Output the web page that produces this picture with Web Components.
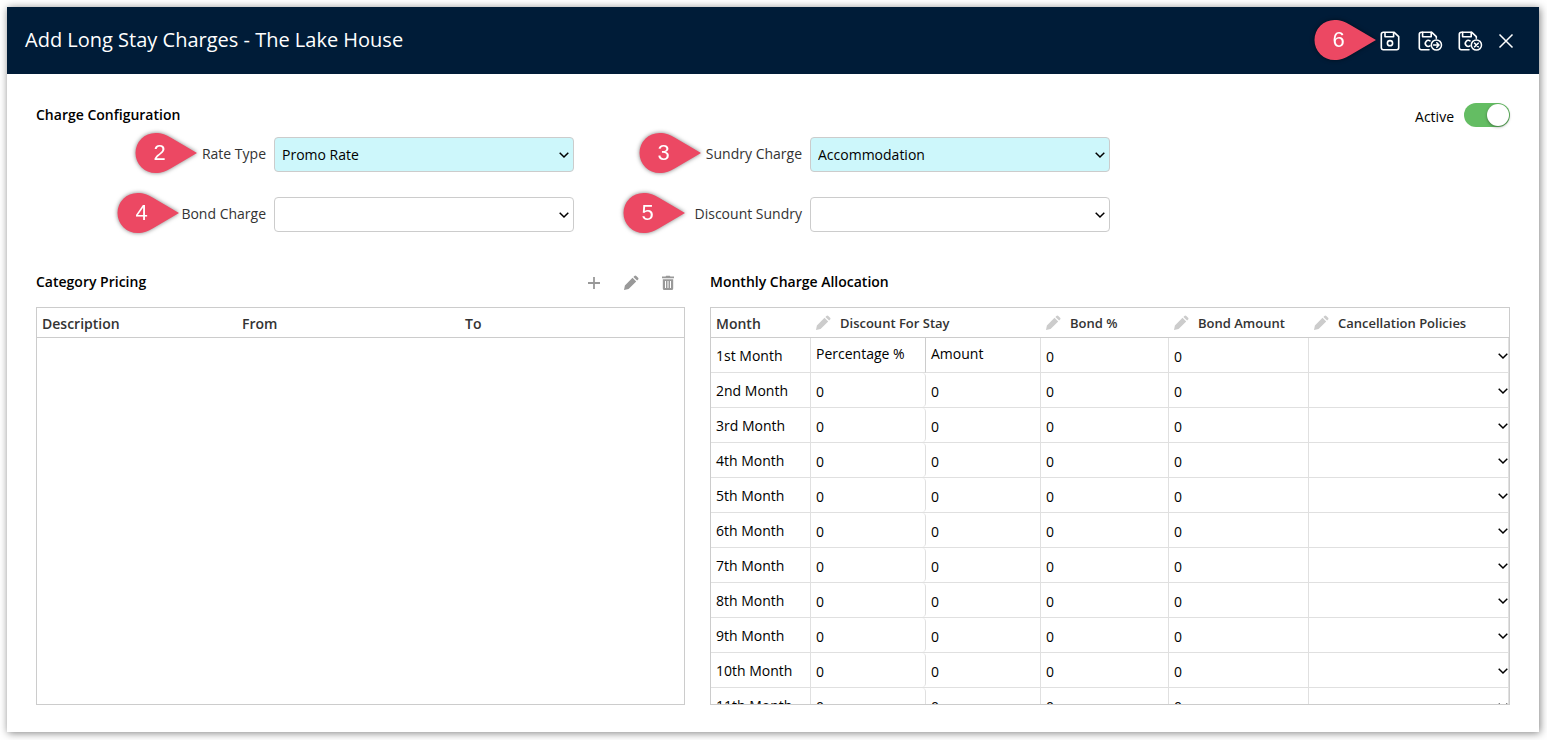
<!DOCTYPE html>
<html lang="en">
<head>
<meta charset="utf-8">
<title>Add Long Stay Charges</title>
<style>
    body {
        margin: 0;
        background: #fff;
        font-family: "Open Sans", "Noto Sans", sans-serif;
        font-size: 14px;
        line-height: 20px;
        color: #000;
    }
</style>
</head>
<body>
<charge-dialog></charge-dialog>

<script>
const ICONS = {
    save: ['0 0 20 20', 20, `<g fill="none" stroke="currentColor" stroke-width="1.6" stroke-linejoin="round">
        <path d="M3 1.3h11.2L18.7 5.6v11.2a1.9 1.9 0 0 1-1.9 1.9H3.2a1.9 1.9 0 0 1-1.9-1.900V3.2a1.9 1.9 0 0 1 1.9-1.9z"/>
        <path d="M5 1.3v4.5h8.600V1.3"/><circle cx="10" cy="12.2" r="2.6"/></g>`],
    saveNext: ['-2 0 26 20', 26, `<g fill="none" stroke="currentColor" stroke-width="1.6" stroke-linejoin="round" stroke-linecap="round">
        <path d="M11 18.7H3.2a1.9 1.9 0 0 1-1.9-1.900V3.2a1.9 1.9 0 0 1 1.9-1.9h10.6L18.3 5.6v1.6"/>
        <path d="M4.6 1.3v4.5h8.600V1.3"/><path d="M12 9.9a3 3 0 1 0 0 5"/>
        <circle cx="18.4" cy="14" r="5.1" stroke-width="1.5"/><path d="M15.600 14h5.2M18.8 11.8L21 14l-2.2 2.2"/></g>`],
    saveClose: ['0 0 25 20', 25, `<g fill="none" stroke="currentColor" stroke-width="1.6" stroke-linejoin="round" stroke-linecap="round">
        <path d="M11 18.7H3.2a1.9 1.9 0 0 1-1.9-1.900V3.2a1.9 1.9 0 0 1 1.9-1.9h10.6L18.3 5.6v1.6"/>
        <path d="M4.6 1.3v4.5h8.600V1.3"/><path d="M12 9.9a3 3 0 1 0 0 5"/>
        <circle cx="18.4" cy="14" r="5.1" stroke-width="1.5"/><path d="M16.6 12.2l3.6 3.6M20.2 12.2l-3.6 3.6"/></g>`],
    close: ['0 0 14 14', 14, '<path d="M.5.5l13 13M13.5.5L.5 13.5" fill="none" stroke="currentColor" stroke-width="1.5"/>'],
    plus: ['-2 0 16 12', 16, '<path d="M6 0v12M0 6h12" fill="none" stroke="currentColor" stroke-width="1.8"/>'],
    pencil: ['1 0 15 16', 15, `<path fill="currentColor" d="M1 15l.9-4.600L9.500 2.8l3.7 3.7-7.6 7.6zM10.4 1.9l1-1a1.3 1.3 0 0 1 1.9 0l1.8 1.8a1.3 1.3 0 0 1 0 1.9l-1 1z"/>`],
    trash: ['0 0 14 16', 14, `<path fill="currentColor" fill-rule="evenodd" d="M1 1.500h3.600L5.200.8h3.600l.6.700H13V3.200H1zM1.800 4.200h10.400V13.500a1.500 1.500 0 0 1-1.500 1.500H3.300a1.500 1.500 0 0 1-1.500-1.500zM4 6v7h1V6zM6.500 6v7h1V6zM9 6v7h1V6z"/>`],
    chevron: ['0 0 10 6', 10, '<path d="M.7.7L5 5 9.3.7" fill="none" stroke="currentColor" stroke-width="1.5"/>']
};

class UiIcon extends HTMLElement {
    connectedCallback() {
        if (this.shadowRoot) return;
        this.attachShadow({ mode: 'open' });
        const [box, width, shape] = ICONS[this.getAttribute('name')];
        this.shadowRoot.innerHTML = `
            <style>
                :host { display: inline-flex; flex: none; }
                svg { display: block; overflow: visible; }
            </style>
            <svg viewBox="${box}" width="${width}" height="${box.split(' ')[3]}" aria-hidden="true">${shape}</svg>
        `;
    }
}

class StepPin extends HTMLElement {
    constructor() {
        super();
        this.attachShadow({ mode: 'open' }).innerHTML = `
            <style>
                :host {
                    position: absolute;
                    display: block;
                    width: 62px;
                    height: 40px;
                    pointer-events: none;
                    filter: drop-shadow(0 0 2px rgba(0, 0, 0, 0.5));
                }
                svg { position: absolute; inset: 0; }
                span {
                    position: relative;
                    display: block;
                    width: 49px;
                    text-align: center;
                    font: 22px/40px "Liberation Sans", Arial, sans-serif;
                    color: #fff;
                }
            </style>
            <svg width="62" height="40" viewBox="0 0 62 40" aria-hidden="true">
                <path fill="#ec4863" d="M20.5 0C27 0 31 1.8 36 4.8L62 20 36 35.2C31 38.2 27 40 20.5 40A20 20 0 0 1 20.5 0z"/>
            </svg>
            <span><slot></slot></span>
        `;
    }
}

class IconButton extends HTMLElement {
    connectedCallback() {
        if (this.shadowRoot) return;
        this.attachShadow({ mode: 'open' });
        this.shadowRoot.innerHTML = `
            <style>
                :host { display: inline-flex; position: relative; }
                button {
                    display: flex;
                    align-items: center;
                    padding: 0;
                    border: 0;
                    background: none;
                    color: inherit;
                    cursor: pointer;
                }
            </style>
            <button type="button" aria-label="${this.getAttribute('label')}">
                <ui-icon name="${this.getAttribute('icon')}"></ui-icon>
            </button>
            <slot></slot>
        `;
    }
}

class SelectField extends HTMLElement {
    connectedCallback() {
        if (this.shadowRoot) return;
        this.attachShadow({ mode: 'open' });
        const value = this.getAttribute('value') || '';
        this.shadowRoot.innerHTML = `
            <style>
                :host {
                    position: relative;
                    display: flex;
                    justify-content: flex-end;
                    align-items: center;
                    gap: 8px;
                }
                label {
                    padding-bottom: 2px;
                    color: #333;
                }
                .box {
                    display: grid;
                    align-items: center;
                    width: 300px;
                }
                select, ui-icon { grid-area: 1 / 1; }
                select {
                    appearance: none;
                    box-sizing: border-box;
                    width: 100%;
                    height: 35px;
                    padding: 0 24px 0 7px;
                    border: 1px solid #ccc;
                    border-radius: 4px;
                    background: #fff;
                    font: inherit;
                    color: #000;
                }
                .filled { background: #cdf7fb; }
                ui-icon {
                    justify-self: end;
                    margin-right: 5px;
                    pointer-events: none;
                }
            </style>
            <label for="field">${this.getAttribute('label')}</label>
            <div class="box">
                <select id="field" class="${value ? 'filled' : ''}"><option>${value}</option></select>
                <ui-icon name="chevron"></ui-icon>
            </div>
            <slot></slot>
        `;
    }
}

class ToggleSwitch extends HTMLElement {
    constructor() {
        super();
        this.attachShadow({ mode: 'open' }).innerHTML = `
            <style>
                :host { display: block; }
                label {
                    display: flex;
                    align-items: center;
                    gap: 10px;
                }
                span { padding-top: 4px; }
                input {
                    appearance: none;
                    display: flex;
                    box-sizing: border-box;
                    width: 46px;
                    height: 24px;
                    margin: 0;
                    padding: 1px;
                    border-radius: 12px;
                    background: #ccc;
                }
                input::before {
                    content: "";
                    width: 22px;
                    height: 22px;
                    border-radius: 50%;
                    background: #fff;
                    box-shadow: 0 1px 3px rgba(0, 0, 0, 0.4);
                }
                input:checked {
                    justify-content: flex-end;
                    background: #64bd63;
                }
            </style>
            <label><span><slot></slot></span><input type="checkbox" role="switch" checked></label>
        `;
    }
}

// Titled box with a slot for buttons and a clipped, scrolling body
class DataPanel extends HTMLElement {
    constructor() {
        super();
        this.attachShadow({ mode: 'open' }).innerHTML = `
            <style>
                :host {
                    display: flex;
                    flex-direction: column;
                    min-width: 0;
                    min-height: 0;
                }
                header {
                    display: flex;
                    justify-content: space-between;
                    align-items: center;
                    height: 20px;
                    margin-bottom: 15px;
                }
                h2 {
                    margin: 0;
                    font-size: 14px;
                    font-weight: 650;
                }
                .view {
                    flex: 1;
                    min-height: 0;
                    overflow-y: auto;
                    scrollbar-width: none;
                    border: 1px solid #ccc;
                }
            </style>
            <header><h2><slot name="title"></slot></h2><slot name="tools"></slot></header>
            <div class="view"><slot></slot></div>
        `;
    }
}

const TABLE_STYLE = `
    :host { display: block; }
    table {
        width: 100%;
        table-layout: fixed;
        border-collapse: separate;
        border-spacing: 0;
    }
    th, td {
        box-sizing: border-box;
        padding: 0 5px;
        text-align: left;
        font-weight: 400;
        white-space: nowrap;
    }
    thead th {
        height: 30px;
        padding-top: 2px;
        border-bottom: 1px solid #ccc;
        font-weight: 650;
        color: #333;
    }
`;

class CategoryTable extends HTMLElement {
    constructor() {
        super();
        this.attachShadow({ mode: 'open' }).innerHTML = `
            <style>
                ${TABLE_STYLE}
                .description { width: 200px; }
                .from { width: 223px; }
            </style>
            <table>
                <thead>
                    <tr>
                        <th class="description">Description</th>
                        <th class="from">From</th>
                        <th>To</th>
                    </tr>
                </thead>
                <tbody></tbody>
            </table>
        `;
    }
}

class MonthTable extends HTMLElement {
    connectedCallback() {
        if (this.shadowRoot) return;
        this.attachShadow({ mode: 'open' });
        this.shadowRoot.innerHTML = `
            <style>
                ${TABLE_STYLE}
                .month { width: 100px; }
                .half { width: 115px; }
                .bond { width: 128px; }
                .amount { width: 140px; }
                thead th.group { padding-top: 0; }
                .edit {
                    display: flex;
                    align-items: center;
                    gap: 9px;
                    font-size: 13px;
                }
                .edit icon-button { color: #ccc; }
                tbody th, tbody td {
                    height: 35px;
                    border-right: 1px solid #e0e0e0;
                    border-bottom: 1px solid #e0e0e0;
                }
                tbody th { padding-top: 2px; }
                tbody td { padding: 0; }
                tbody td.sub { padding: 0 5px 2px; }
                td.first { border-right-color: #ccc; }
                td.percent { border-right: 0; }
                input, select {
                    display: block;
                    box-sizing: border-box;
                    width: 100%;
                    height: 34px;
                    margin: 0;
                    padding: 2px 5px 0;
                    border: 0;
                    background: none;
                    font: inherit;
                    color: inherit;
                }
                .percent input {
                    border-right: 1px solid #e0e0e0;
                    border-radius: 4px;
                }
                select { appearance: none; }
                .pick {
                    display: grid;
                    align-items: center;
                }
                .pick > * { grid-area: 1 / 1; }
                .pick ui-icon {
                    justify-self: end;
                    padding-top: 2px;
                    pointer-events: none;
                }
            </style>
            <table>
                <colgroup>
                    <col class="month"><col class="half"><col class="half">
                    <col class="bond"><col class="amount"><col>
                </colgroup>
                <thead>
                    <tr>
                        <th>Month</th>
                        ${this.heading('Discount For Stay', 2)}
                        ${this.heading('Bond %')}
                        ${this.heading('Bond Amount')}
                        ${this.heading('Cancellation Policies')}
                    </tr>
                </thead>
                <tbody>${this.rows()}</tbody>
            </table>
        `;
    }

    heading(text, span = 1) {
        return `<th class="group" colspan="${span}"><div class="edit"><icon-button icon="pencil" label="Edit ${text}"></icon-button>${text}</div></th>`;
    }

    rows() {
        const suffix = ['st', 'nd', 'rd'];
        let html = '';
        for (let i = 1; i <= 11; i++) {
            const month = `${i}${suffix[i - 1] || 'th'} Month`;
            const number = (label) => `<input type="text" inputmode="numeric" value="0" aria-label="${month} ${label}">`;
            const discount = i === 1
                ? '<td class="sub first">Percentage %</td><td class="sub">Amount</td>'
                : `<td class="percent">${number('percentage')}</td><td>${number('discount amount')}</td>`;
            html += `
                <tr>
                    <th scope="row">${month}</th>
                    ${discount}
                    <td>${number('bond percent')}</td>
                    <td>${number('bond amount')}</td>
                    <td><div class="pick">
                        <select aria-label="${month} cancellation policy"><option></option></select>
                        <ui-icon name="chevron"></ui-icon>
                    </div></td>
                </tr>`;
        }
        return html;
    }
}

class ChargeDialog extends HTMLElement {
    constructor() {
        super();
        this.attachShadow({ mode: 'open' }).innerHTML = `
            <style>
                :host {
                    display: flex;
                    box-sizing: border-box;
                    height: 100vh;
                    padding: 7px 8px 8px 7px;
                }
                section {
                    flex: 1;
                    display: flex;
                    flex-direction: column;
                    min-width: 0;
                    background: #fff;
                    box-shadow: 1px 1px 8px rgba(0, 0, 0, 0.5);
                }
                .bar {
                    display: flex;
                    box-sizing: border-box;
                    justify-content: space-between;
                    align-items: center;
                    height: 67px;
                    padding: 0 26px 2px 18px;
                    background: #001c38;
                    color: #fff;
                }
                h1 {
                    margin: 0;
                    font-size: 20px;
                    font-weight: 400;
                    line-height: 28px;
                }
                .actions {
                    display: flex;
                    align-items: center;
                    gap: 16px;
                    padding-top: 3px;
                }
                .actions step-pin { right: 24px; top: -11px; }
                main {
                    flex: 1;
                    display: flex;
                    flex-direction: column;
                    min-height: 0;
                    padding: 29px 29px 27px;
                }
                .top {
                    display: flex;
                    justify-content: space-between;
                    align-items: center;
                    height: 24px;
                }
                h2 {
                    margin: 0;
                    font-size: 14px;
                    font-weight: 650;
                }
                form {
                    display: grid;
                    grid-template-columns: 538px 536px;
                    row-gap: 25px;
                    padding: 10px 0 40px;
                }
                form step-pin { top: -4px; }
                .tables {
                    flex: 1;
                    display: grid;
                    grid-template-columns: 649fr 800fr;
                    grid-template-rows: minmax(0, 1fr);
                    gap: 25px;
                    min-height: 0;
                }
                .tools {
                    display: flex;
                    align-items: center;
                    gap: 22px;
                    padding: 2px 10px 0 0;
                    color: #999;
                }
            </style>
            <section>
                <div class="bar">
                    <h1>Add Long Stay Charges - The Lake House</h1>
                    <div class="actions">
                        <icon-button icon="save" label="Save"><step-pin>6</step-pin></icon-button>
                        <icon-button icon="saveNext" label="Save and continue"></icon-button>
                        <icon-button icon="saveClose" label="Save and close"></icon-button>
                        <icon-button icon="close" label="Close"></icon-button>
                    </div>
                </div>
                <main>
                    <div class="top">
                        <h2>Charge Configuration</h2>
                        <toggle-switch>Active</toggle-switch>
                    </div>
                    <form>
                        <select-field label="Rate Type" value="Promo Rate">
                            <step-pin style="left: 99px">2</step-pin>
                        </select-field>
                        <select-field label="Sundry Charge" value="Accommodation">
                            <step-pin style="left: 65px">3</step-pin>
                        </select-field>
                        <select-field label="Bond Charge">
                            <step-pin style="left: 81px">4</step-pin>
                        </select-field>
                        <select-field label="Discount Sundry">
                            <step-pin style="left: 49px">5</step-pin>
                        </select-field>
                    </form>
                    <div class="tables">
                        <data-panel>
                            <span slot="title">Category Pricing</span>
                            <div slot="tools" class="tools">
                                <icon-button icon="plus" label="Add"></icon-button>
                                <icon-button icon="pencil" label="Edit"></icon-button>
                                <icon-button icon="trash" label="Delete"></icon-button>
                            </div>
                            <category-table></category-table>
                        </data-panel>
                        <data-panel>
                            <span slot="title">Monthly Charge Allocation</span>
                            <month-table></month-table>
                        </data-panel>
                    </div>
                </main>
            </section>
        `;
    }
}

customElements.define('ui-icon', UiIcon);
customElements.define('step-pin', StepPin);
customElements.define('icon-button', IconButton);
customElements.define('select-field', SelectField);
customElements.define('toggle-switch', ToggleSwitch);
customElements.define('data-panel', DataPanel);
customElements.define('category-table', CategoryTable);
customElements.define('month-table', MonthTable);
customElements.define('charge-dialog', ChargeDialog);
</script>
</body>
</html>
